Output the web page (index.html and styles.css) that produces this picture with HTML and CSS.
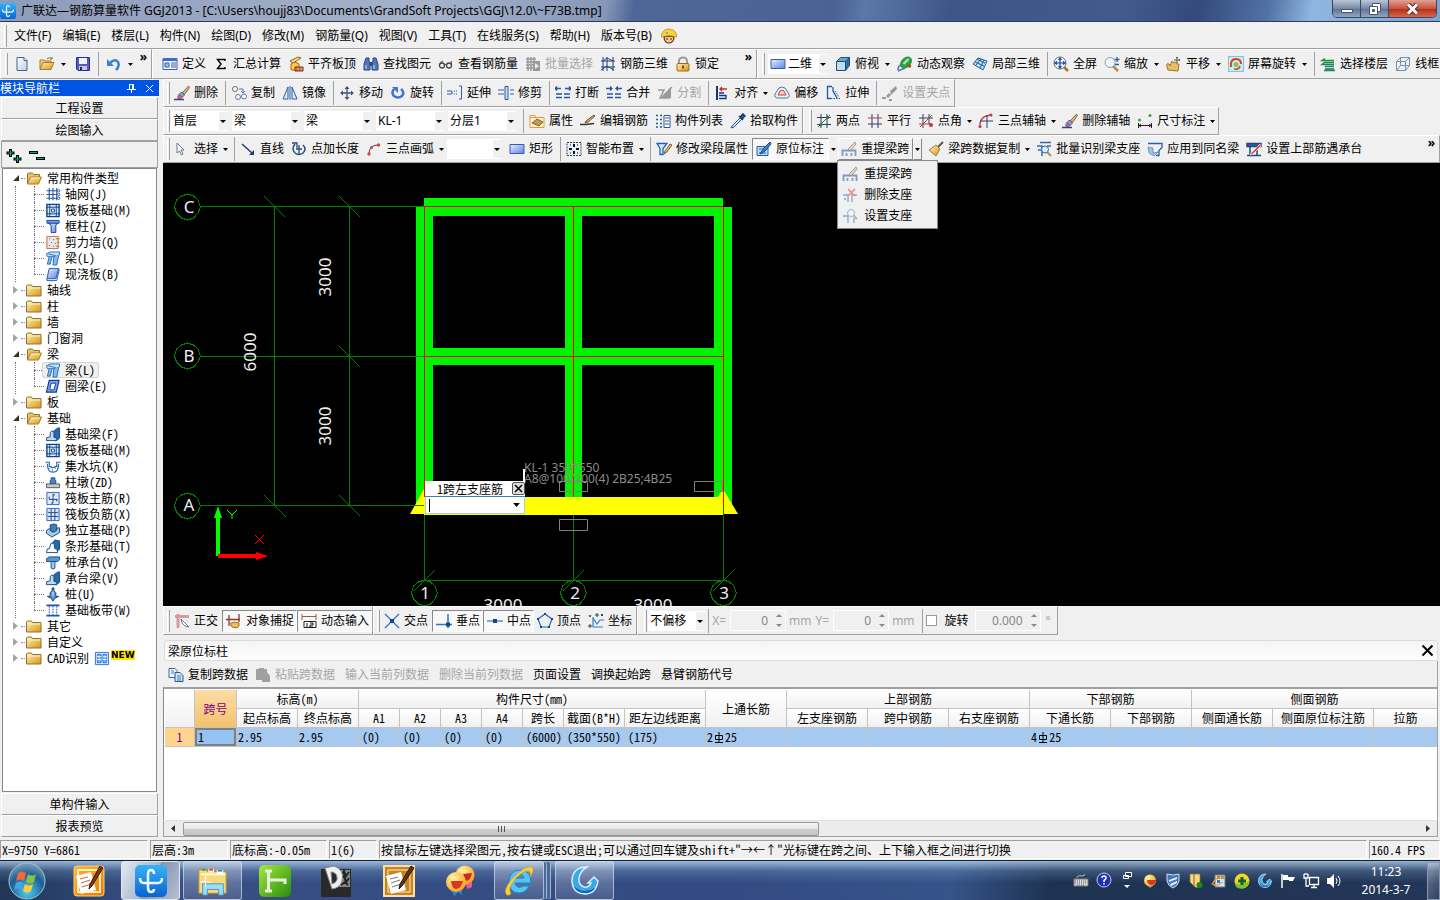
FILE: index.html
```html
<!DOCTYPE html>
<html lang="zh-CN">
<head>
<meta charset="utf-8">
<title>广联达—钢筋算量软件 GGJ2013</title>
<link rel="stylesheet" href="styles.css">
</head>
<body>
<svg class="sprite" width="0" height="0" aria-hidden="true">
<defs>
<linearGradient id="gBlue" x1="0" y1="0" x2="1" y2="1"><stop offset="0" stop-color="#e4eeff"/><stop offset="1" stop-color="#5c86e0"/></linearGradient>
<linearGradient id="gGold" x1="0" y1="0" x2="1" y2="1"><stop offset="0" stop-color="#fdf3b8"/><stop offset="1" stop-color="#d9930f"/></linearGradient>
<linearGradient id="gPaper" x1="0" y1="0" x2="1" y2="1"><stop offset="0" stop-color="#fff"/><stop offset="1" stop-color="#b9cfe6"/></linearGradient>
<linearGradient id="gSky" x1="0" y1="0" x2="0" y2="1"><stop offset="0" stop-color="#36b3f6"/><stop offset="1" stop-color="#0b62d2"/></linearGradient>
<linearGradient id="gGreen" x1="0" y1="0" x2="1" y2="1"><stop offset="0" stop-color="#a6e83e"/><stop offset="1" stop-color="#278d0c"/></linearGradient>
<linearGradient id="gOrange" x1="0" y1="0" x2="1" y2="1"><stop offset="0" stop-color="#ffb52e"/><stop offset="1" stop-color="#f07800"/></linearGradient>
<radialGradient id="gOrb" cx=".5" cy=".8" r=".8"><stop offset="0" stop-color="#4fd0f5"/><stop offset=".6" stop-color="#1c5c94"/><stop offset="1" stop-color="#7fa4bd"/></radialGradient>
<radialGradient id="gFace" cx=".35" cy=".3" r=".8"><stop offset="0" stop-color="#fff3a8"/><stop offset="1" stop-color="#f69d0c"/></radialGradient>
</defs>
<symbol id="app" viewBox="0 0 32 32"><rect width="32" height="32" rx="5" fill="url(#gSky)"/><path d="M19 9q0-4-3-4t-3 4v14q0 4 3 4t3-3M5 13q0 5 4 5h14q4 0 4-5" fill="none" stroke="#e9f6ff" stroke-width="2.500"/></symbol>
<symbol id="new" viewBox="0 0 16 16"><path d="M3 1.500h7l3 3v10H3z" fill="url(#gPaper)" stroke="#4b6385"/><path d="M10 1.500v3h3" fill="#fff" stroke="#4b6385"/></symbol>
<symbol id="open" viewBox="0 0 16 16"><path d="M1 13V4h4l1 1h6v2" fill="#f4cf72" stroke="#a97a2c"/><path d="M1 13.500l3-7h11l-3 7z" fill="url(#gGold)" stroke="#a97a2c"/><path d="M8 3q3-3 5 0m0-2v2h-2" fill="none" stroke="#7a6a4a"/></symbol>
<symbol id="save" viewBox="0 0 16 16"><path d="M1.500 1.500h13v13H3l-1.500-1.500z" fill="#5759c4" stroke="#2c2d86"/><path d="M4 2h8v6H4z" fill="#f2f4fb"/><path d="M4 10h8v4H4z" fill="#c4c6e6"/><path d="M5 11h2v3H5z" fill="#23245e"/></symbol>
<symbol id="undo" viewBox="0 0 16 16"><path d="M4 7q5-5 8-1 2 4-2 8" fill="none" stroke="#3f7fd0" stroke-width="2.500"/><path d="M1 3v7h7z" fill="#3f7fd0"/></symbol>
<symbol id="define" viewBox="0 0 16 16"><path d="M1 2.500h14v11H1z" fill="#eef4ff" stroke="#3a62a8"/><path d="M1 2h14v3H1z" fill="#3c6fc4"/><path d="M3 7h4v4H3z" fill="#9ab9ea" stroke="#3a62a8"/><path d="M9 7h5M9 9h5M9 11h5" stroke="#3a62a8"/></symbol>
<symbol id="sum" viewBox="0 0 16 16"><path d="M12 5V3.500H4.500L8 8l-3.500 4.500H12V11" fill="none" stroke="#000" stroke-width="1.400"/></symbol>
<symbol id="slab" viewBox="0 0 16 16"><path d="M2 5l8-4 3 1-8 5z" fill="#f8e08c" stroke="#8a6116"/><path d="M3 14V8l4-2 4 2v6z" fill="#ffc94c" stroke="#a8690d"/><path d="M7 15V11h8v4z" fill="#b4522c" stroke="#7b2f13"/><path d="M7 13h8M10 11v4M13 11v4" stroke="#eeb595" stroke-width=".7"/></symbol>
<symbol id="find" viewBox="0 0 16 16"><path d="M3 2h3v3l1 2v7H1V8z M10 2h3l2 6v6H9V7l1-2z" fill="#4f76b8" stroke="#2b4680"/><path d="M7 6h2v4H7z" fill="#2b4680"/><path d="M3 9v4M11 9v4" stroke="#d2e1fa"/></symbol>
<symbol id="glasses" viewBox="0 0 16 16"><circle cx="4" cy="9.500" r="2.500" fill="none" stroke="#444" stroke-width="1.300"/><circle cx="11" cy="9.500" r="2.500" fill="none" stroke="#444" stroke-width="1.300"/><path d="M6.500 9q1-1 2 0M2 8q1-3 3-3M13 9q1-3 0-4" fill="none" stroke="#444"/></symbol>
<symbol id="batch" viewBox="0 0 16 16"><path d="M1 3h10M1 6h8M1 9h8M1 12h8M3 1v14M6 1v14M9 1v4" stroke="#999" stroke-width="1.500"/><path d="M8 5h7v10H8z" fill="#999"/><path d="M10 7l4 3-4 3z" fill="#eee"/></symbol>
<symbol id="rebar3d" viewBox="0 0 16 16"><path d="M3 1v14M7 1v14M13 1v14M1 5h14M1 11h14M1 14l6-4M7 10l7 4M3 5l4-3 6 3" fill="none" stroke="#243f78"/></symbol>
<symbol id="lock" viewBox="0 0 16 16"><path d="M4 8V5q0-3.500 4-3.500T12 5v3" fill="none" stroke="#9c9c9c" stroke-width="2"/><rect x="2" y="7.500" width="12" height="7.500" rx="1" fill="url(#gGold)" stroke="#9c6c15"/><path d="M8 9.500v3" stroke="#553607" stroke-width="1.600"/></symbol>
<symbol id="rect" viewBox="0 0 16 16"><path d="M1 3.500h14v9H1z" fill="url(#gBlue)" stroke="#3a5cb0"/></symbol>
<symbol id="cube" viewBox="0 0 16 16"><path d="M1.500 5.500h9v9h-9z" fill="#c4dcf0" stroke="#1e4f7c"/><path d="M1.500 5.500l4-4h9l-4 4z" fill="#6ba5d4" stroke="#1e4f7c"/><path d="M10.500 5.500l4-4v8l-4 5z" fill="#2d6ea8" stroke="#1e4f7c"/></symbol>
<symbol id="wire" viewBox="0 0 16 16"><path d="M1.500 5.500h9v9h-9zM1.500 5.500l4-4h9l-4 4M14.500 1.500v8l-4 5M5.500 1.500v8h9M5.500 9.500l-4 5" fill="none" stroke="#7292b4"/></symbol>
<symbol id="orbit" viewBox="0 0 16 16"><ellipse cx="9" cy="6.500" rx="6.500" ry="4.500" fill="#2aa43c" stroke="#146b22" stroke-width=".6" transform="rotate(-45 9 6.500)"/><path d="M6.500 8l5-5" stroke="#b5efac" stroke-width="2"/><path d="M1 14q0-5 4-5M1 15l7-3" fill="none" stroke="#4e78b0" stroke-width="1.500"/><circle cx="12.500" cy="10" r="1.700" fill="#d43b1c"/></symbol>
<symbol id="part3d" viewBox="0 0 16 16"><path d="M1 8l5-6 9 3-4 9z" fill="#bcdaf0" stroke="#256199"/><path d="M4 9l5-6M8 12l4-8M3 6l9 4M5 3l8 4" stroke="#256199"/></symbol>
<symbol id="full" viewBox="0 0 16 16"><path d="M11 11l4 4" stroke="#b17121" stroke-width="2.500"/><circle cx="7" cy="7" r="6" fill="#eaf3ff" stroke="#55708f"/><path d="M7 2v10M2 7h10M5.500 4L7 2l1.500 2M5.500 10L7 12l1.500-2M4 5.500L2 7l2 1.500M10 5.500L12 7l-2 1.500" fill="none" stroke="#214c93" stroke-width="1.200"/></symbol>
<symbol id="zoom" viewBox="0 0 16 16"><path d="M9 10l5 5" stroke="#b98d4e" stroke-width="2.500"/><circle cx="6" cy="6.500" r="5" fill="#eef5fc" stroke="#8b9bac"/><path d="M13 1v5M10.500 3.500h5M11 8.500h4" stroke="#345f9f" stroke-width="1.300"/></symbol>
<symbol id="pan" viewBox="0 0 16 16"><path d="M2 14q-3-8 1-6l1 2 2-5 2 2 2-1 1 2 2 0-1 7z" fill="#e9bf64" stroke="#9e7424"/><path d="M11 1v6M8 4h6M10 2l1-1 1 1M13 3l1 1-1 1" fill="none" stroke="#555"/></symbol>
<symbol id="rotscr" viewBox="0 0 16 16"><rect x=".5" y=".5" width="15" height="15" fill="#c4edf7" stroke="#7fc4d6"/><path d="M3 11q-1-8 5-8 5 0 5 5" fill="none" stroke="#e33a22" stroke-width="2"/><path d="M6 13q5 1 6-3" fill="none" stroke="#e33a22" stroke-width="1.500"/><circle cx="8" cy="8.500" r="2.500" fill="#84c840"/></symbol>
<symbol id="floor" viewBox="0 0 16 16"><path d="M5 2.500l-3 2h12M5 6.500h9M5 6l-3 2.500h12M5 10.500h9M4 14.500h11" fill="none" stroke="#1f8a4c" stroke-width="1.500"/><path d="M5 13h9" stroke="#275a9b" stroke-width="1.500"/></symbol>
<symbol id="brush" viewBox="0 0 16 16"><path d="M14.500 1l-6 6.500 2 2 5-7z" fill="#dcb184" stroke="#6e4a25" stroke-width=".8"/><path d="M7.500 7l3 3-2.500 2.500-3-3z" fill="#8aa2d6" stroke="#2f4577" stroke-width=".8"/><path d="M5 9.500l3 3-1.500 1.500H4.500L3.500 12z" fill="#e0628c" stroke="#7b2c4c" stroke-width=".6"/><path d="M0 14.500h10" stroke="#234a8c" stroke-width="1.500"/></symbol>
<symbol id="copy" viewBox="0 0 16 16"><circle cx="4" cy="4" r="2.500" fill="#fff" stroke="#666"/><circle cx="7" cy="12" r="2.500" fill="#fff" stroke="#5577a5"/><circle cx="13" cy="11.500" r="2.500" fill="#fff" stroke="#5577a5"/><path d="M8 4h4v4M10 6l2 2 2-2" fill="none" stroke="#5577a5"/></symbol>
<symbol id="mirror" viewBox="0 0 16 16"><path d="M6 2v12H1zM10 2v12h5z" fill="#dbe9fb" stroke="#2f5ea4"/><path d="M8 1v14" stroke="#2f5ea4"/></symbol>
<symbol id="move" viewBox="0 0 16 16"><path d="M8 2v12M2 8h12" stroke="#3d5779" stroke-width="1.300"/><path d="M8 1l2.500 3h-5zM8 15l2.500-3h-5zM1 8l3-2.500v5zM15 8l-3-2.500v5z" fill="#3d5779"/></symbol>
<symbol id="rotate" viewBox="0 0 16 16"><path d="M4 4q-3 4 0 7 4 3 8 0 3-4-1-7" fill="none" stroke="#3b78cc" stroke-width="2.500"/><path d="M2 2h6v6z" fill="#3b78cc"/></symbol>
<symbol id="extend" viewBox="0 0 16 16"><path d="M0 6h5v3H0M7 6h1M7 9h1M9 6h1M9 9h1" fill="none" stroke="#2f5ea4"/><path d="M12 1h2.500v13H12" fill="none" stroke="#2f5ea4"/></symbol>
<symbol id="trim" viewBox="0 0 16 16"><path d="M0 5h6M0 9h6M12 5h4M12 9h4" stroke="#2f5ea4"/><path d="M7 1.500h3v13H7z" fill="#c5d9f2" stroke="#2f5ea4"/></symbol>
<symbol id="break" viewBox="0 0 16 16"><path d="M0 3.500h6M10 3.500h6M2 1.500l-2 2 2 2M14 1.500l2 2-2 2M1 9h6M1 12.500h6M9 9h6M9 12.500h6" fill="none" stroke="#2456a4" stroke-width="1.300"/></symbol>
<symbol id="merge" viewBox="0 0 16 16"><path d="M0 3.500h6M10 3.500h6M4 1.500l2 2-2 2M12 1.500l-2 2 2 2M1 9h6M1 12.500h6M9 9h6M9 12.500h6" fill="none" stroke="#2456a4" stroke-width="1.300"/></symbol>
<symbol id="split" viewBox="0 0 16 16"><path d="M1 5h6l-4 8h9V5l3-3" fill="none" stroke="#999" stroke-width="1.500"/><path d="M3 13L14 2v11z" fill="#999"/></symbol>
<symbol id="align" viewBox="0 0 16 16"><path d="M3 1v14" stroke="#16357c" stroke-width="2"/><path d="M6 4h7M8 2L6 4l2 2" fill="none" stroke="#c62a2a" stroke-width="1.300"/><path d="M5 8h5M5 10.500h7v3H5" fill="none" stroke="#16357c" stroke-width="1.300"/></symbol>
<symbol id="offset" viewBox="0 0 16 16"><path d="M5 3q3-2 6 0l4 6q1 4-3 4H4q-4 0-3-4z" fill="#eaf5fa" stroke="#467c98"/><path d="M6 6q2-2 4 0l2 4H4z" fill="#f6cccc" stroke="#c44040"/></symbol>
<symbol id="stretch" viewBox="0 0 16 16"><path d="M7 1.500H2.500v12H6M8 2v4l4 7" fill="none" stroke="#2456a4" stroke-width="1.300"/><path d="M6 13.500h9M10 6l4 6" stroke="#2456a4" stroke-dasharray="1.500 1"/></symbol>
<symbol id="grip" viewBox="0 0 16 16"><path d="M14 1l-6 5 1 4 6-6z M7 8l-3 3 2 2 3-3z" fill="#999"/><path d="M0 13h4M7 15h3" stroke="#999" stroke-width="2"/></symbol>
<symbol id="prop" viewBox="0 0 16 16"><path d="M1 2.500h5l1 2h8v10H1z" fill="#fff3d6" stroke="#e09a3a"/><path d="M1 4.500h14" stroke="#e09a3a"/><path d="M3 10l5-4 6 3-4 4z" fill="#c79a48" stroke="#5e3d13" stroke-width=".7"/></symbol>
<symbol id="editbar" viewBox="0 0 16 16"><path d="M14 2l-8 6-1 2 3-1 7-6z" fill="#e4b76c" stroke="#70502a"/><path d="M0 11.500h6l8-1" fill="none" stroke="#333" stroke-width="1.500"/></symbol>
<symbol id="list" viewBox="0 0 16 16"><path d="M1 2.500h2M1 6.500h2M1 10.500h2M1 14h2M5 2.500h2M5 6.500h2M5 10.500h2M5 14h2" stroke="#2a569d" stroke-width="1.500"/><path d="M9 2.500h6v12H9z" fill="#fff" stroke="#2a569d"/><path d="M10 5h4M10 8h4M10 11h4" stroke="#2a569d"/></symbol>
<symbol id="pick" viewBox="0 0 16 16"><path d="M10 5l-8 8-1 2 3-1 8-8z" fill="#d8ecff" stroke="#27588f"/><path d="M9 3l4 4M10 4l3-3 2 2-3 3z" fill="#1c5ba5" stroke="#143f75" stroke-width="1.500"/></symbol>
<symbol id="twopt" viewBox="0 0 16 16"><path d="M5 1v14M11 1v14M1 4.500h14M1 11.500h14" stroke="#293f6c"/><path d="M2 14L14 2" stroke="#37792b"/><circle cx="5" cy="11.500" r="1.500" fill="#37792b"/><circle cx="11.500" cy="4.500" r="1.500" fill="#37792b"/></symbol>
<symbol id="para" viewBox="0 0 16 16"><path d="M5 1v14M11 1v14" stroke="#293f6c"/><path d="M1 5h14" stroke="#c43a3a"/><path d="M1 11h14" stroke="#293f6c"/></symbol>
<symbol id="ptang" viewBox="0 0 16 16"><path d="M5 1v14M11 1v10M1 5h14" stroke="#293f6c"/><path d="M2 14L14 2M1 11h12" stroke="#c43a3a"/><circle cx="13" cy="12" r="2" fill="#c43a3a"/></symbol>
<symbol id="arcax" viewBox="0 0 16 16"><path d="M2 14Q1 3 13 2" fill="none" stroke="#c43a3a" stroke-width="1.300"/><path d="M2 8h13M9 2v13" stroke="#293f6c"/><circle cx="2" cy="13.500" r="1.500" fill="#c43a3a"/><circle cx="13" cy="2" r="1.500" fill="#c43a3a"/></symbol>
<symbol id="dim" viewBox="0 0 16 16"><circle cx="2.500" cy="7" r="1.500" fill="#37a03a"/><circle cx="13" cy="2.500" r="1.500" fill="#37a03a"/><path d="M1.500 10v5M14.500 10v5M2 12.500h12M4 11l-2 1.500L4 14M12 11l2 1.500-2 1.500" fill="none" stroke="#222"/></symbol>
<symbol id="cursor" viewBox="0 0 16 16"><path d="M3 2v10l2.500-2 2 4 1.500-1-2-4h3z" fill="#fff" stroke="#5e7898"/></symbol>
<symbol id="line" viewBox="0 0 16 16"><path d="M2 3l10 9" stroke="#1e3f70" stroke-width="1.500"/><path d="M14 14H9l5-5z" fill="#1e3f70"/></symbol>
<symbol id="ptlen" viewBox="0 0 16 16"><path d="M4 3q-4 5 0 9 4 3 8 0 4-4 0-8" fill="none" stroke="#274b80" stroke-width="1.500"/><path d="M1 2h5v5M8 4v9M5 8h6" fill="none" stroke="#274b80" stroke-width="1.300"/></symbol>
<symbol id="arc" viewBox="0 0 16 16"><path d="M3 13Q3 4 12 4" fill="none" stroke="#274b80"/><circle cx="3" cy="13" r="1.700" fill="#d24c28"/><circle cx="5.500" cy="6.500" r="1.500" fill="#d24c28"/><circle cx="12.500" cy="4" r="1.700" fill="#d24c28"/></symbol>
<symbol id="smart" viewBox="0 0 16 16"><path d="M1 1.500h14v13H1z" fill="#e8f0fb" stroke="#31425c" stroke-dasharray="2 1"/><path d="M8 3v3M8 10v3M3 8h3M10 8h3" stroke="#111" stroke-width="2"/><path d="M4 4h1M11 4h1M4 12h1M11 12h1" stroke="#111"/></symbol>
<symbol id="modseg" viewBox="0 0 16 16"><path d="M1 2.500h10l-4 5v6H4v-6z" fill="#d7ebff" stroke="#1f63b0" stroke-width="1.300"/><path d="M14 3l-5 7-1 3 3-2 5-7z" fill="#e8b777" stroke="#5e482a" stroke-width=".8"/></symbol>
<symbol id="mark" viewBox="0 0 16 16"><path d="M1 5.500h11v9H1z" fill="#bcd8f7" stroke="#2860a8"/><path d="M3 8h7M3 12h7" stroke="#2860a8"/><path d="M14 1L8 7l-4 6 5-3 6-7z" fill="#3e85d0" stroke="#17457e"/></symbol>
<symbol id="respan" viewBox="0 0 16 16"><path d="M1.500 15V9.500h13V15M5.500 15v-3M10.500 15v-3" fill="none" stroke="#7c9cc6" stroke-width="1.800"/><path d="M14 1L8 7l-1 3 3-1 5-6z" fill="#e4d5bd" stroke="#9a8b76" stroke-width=".8"/></symbol>
<symbol id="delsup" viewBox="0 0 16 16"><path d="M1 8h5v7M15 8h-5v7M2 12h2" fill="none" stroke="#83a8cb" stroke-width="1.300"/><path d="M6 2l7 7M13 2L6 9" stroke="#f0887a" stroke-width="1.500"/></symbol>
<symbol id="setsup" viewBox="0 0 16 16"><path d="M1 8h5v7M12 10v5" fill="none" stroke="#83a8cb" stroke-width="1.300"/><path d="M11 7l4 4" stroke="#ceb07b" stroke-width="2"/><circle cx="9" cy="5" r="3.500" fill="#f3f9fd" stroke="#9fb1c2"/></symbol>
<symbol id="broom" viewBox="0 0 16 16"><path d="M15 1l-5 5" stroke="#555" stroke-width="2"/><path d="M8 4l4 4-4 7-7-6z" fill="url(#gGold)" stroke="#97824a"/></symbol>
<symbol id="recog" viewBox="0 0 16 16"><path d="M4 1.500h11M1 5h5v10M11 5h4M2 9h4" fill="none" stroke="#36689b" stroke-width="1.500"/><path d="M11 11l4 4" stroke="#c28c3f" stroke-width="2"/><circle cx="9" cy="8.500" r="3.500" fill="#d6edfb" stroke="#36689b"/></symbol>
<symbol id="apply" viewBox="0 0 16 16"><path d="M1 2.500h14v4l-3 3v5h-3" fill="none" stroke="#2462a8" stroke-width="1.300"/><path d="M1 6l5 1v5l5-1-4 4-5-3z" fill="#9fc4ed" stroke="#577ca8" stroke-width=".7"/></symbol>
<symbol id="topbar" viewBox="0 0 16 16"><path d="M1 2.500h14v3H1zM4 6v9M11 6v9M1 14.500h14" fill="#2c63a5" stroke="#1f4880" stroke-width="1.500"/><path d="M14 3l-9 9-1 2 3-1 8-8z" fill="#e54a32" stroke="#fff" stroke-width=".6"/></symbol>
<symbol id="ortho" viewBox="0 0 16 16"><path d="M1 3.500h14M4 1v14" stroke="#d99a9a" stroke-width="3"/><path d="M7 6l8 8-4-1-3-3z" fill="#fff" stroke="#6b7d90"/></symbol>
<symbol id="osnap" viewBox="0 0 16 16"><path d="M0 6.500h14M3 2v11M13 1v8" stroke="#8b3a26" stroke-width="1.300"/><path d="M6 14q-3-5 0-4l2-1 5 1v3l-2 2z" fill="#eebf5a" stroke="#997020"/></symbol>
<symbol id="dyn" viewBox="0 0 16 16"><path d="M1 1v6M15 1v6M1 3.500h14" stroke="#9a5a53"/><path d="M3 8.500h12v6H3z" fill="#fff" stroke="#222"/><path d="M6 10v4M9 10h3v2H9v2h3" fill="none" stroke="#111"/></symbol>
<symbol id="xpt" viewBox="0 0 16 16"><path d="M1 1l14 14M15 1L1 15" stroke="#3573c0" stroke-width="1.300"/><path d="M6 6h4v4H6z" fill="#15448c"/></symbol>
<symbol id="perp" viewBox="0 0 16 16"><path d="M0 11.500h16M12 1v14" stroke="#3573c0" stroke-width="1.500"/><path d="M10 9.500h4v4h-4z" fill="#15448c"/></symbol>
<symbol id="mid" viewBox="0 0 16 16"><path d="M0 8h16" stroke="#4f92dc" stroke-width="1.500"/><path d="M6 6h4v4H6z" fill="#15448c"/></symbol>
<symbol id="vertex" viewBox="0 0 16 16"><path d="M8 1l7 5-3 8H4L1 6z" fill="none" stroke="#2563b0" stroke-width="1.200"/><path d="M7 0h2v2H7zM14 5h2v2h-2zM0 5h2v2H0zM3 13h2v2H3zM11 13h2v2h-2z" fill="#15448c"/></symbol>
<symbol id="coord" viewBox="0 0 16 16"><path d="M5 4v10h10M5 5l4 6 3-4 4 0" fill="none" stroke="#3a7cc6" stroke-width="1.200"/><path d="M1 2l1 2 1-2M1 12h2v2H1zM8 1h2v2H8zM13 1l2 2M15 1l-2 2" fill="none" stroke="#345"/></symbol>
<symbol id="docs" viewBox="0 0 16 16"><path d="M1 1.500h6l2 2v7H1z" fill="#eaf3ff" stroke="#37699f"/><path d="M7 5.500h5l3 3v6H7z" fill="#cfe2f8" stroke="#25588f"/><path d="M3 4h3M3 6h3M9 9h4M9 11h4M9 13h4" stroke="#4c80bb"/></symbol>
<symbol id="paste" viewBox="0 0 16 16"><path d="M1 2h3V1h5v1h3v3l3 4v6H7v-2H1z" fill="#a0a0a0"/></symbol>
<symbol id="folder" viewBox="0 0 16 14"><path d="M.5 12.500v-10l1-1h4l1 1.500h8.500v9.500z" fill="url(#gGold)" stroke="#8e7434"/><path d="M1.500 4.500h13" stroke="#fff3bd"/></symbol>
<symbol id="folderopen" viewBox="0 0 16 14"><path d="M1.500 12.500v-10l1-1h4l1 1.500h6v3" fill="#e9c464" stroke="#8e7434"/><path d="M1.500 12.500l3-7h11l-3 7z" fill="url(#gGold)" stroke="#a97f25"/><path d="M5 6.500h9" stroke="#fff6cf"/></symbol>
<symbol id="t-net" viewBox="0 0 16 16"><path d="M4 1v13M8 1v13M12 1v13M1 4h13M1 8h13M1 12h13" stroke="#2a55a4" stroke-width="1.200"/><circle cx="14" cy="4" r="1.300" fill="#fff" stroke="#2a55a4"/><circle cx="14" cy="8" r="1.300" fill="#fff" stroke="#2a55a4"/><circle cx="14" cy="12" r="1.300" fill="#fff" stroke="#2a55a4"/></symbol>
<symbol id="t-raft" viewBox="0 0 16 16"><path d="M1.500 1.500h13v13h-13z" fill="#d3e5f8" stroke="#0d448c" stroke-width="1.500"/><path d="M4.500 1v14M11.500 1v14M1 4.500h14M1 11.500h14" stroke="#0d448c"/><path d="M6.500 6.500h3v3h-3z" fill="#fff" stroke="#0d448c"/></symbol>
<symbol id="t-col" viewBox="0 0 16 16"><path d="M1.500 1.500h13v3h-13z" fill="#7aa0f0" stroke="#1440a8"/><path d="M3 4.500h10l-2 2v8H6v-8z" fill="url(#gBlue)" stroke="#1440a8"/></symbol>
<symbol id="t-wall" viewBox="0 0 16 16"><path d="M1.500 1.500h12v13h-12z" fill="#e9e9e9" stroke="#c26a2e"/><path d="M4 4h1M8 5h1M6 8h1M10 9h1M4 11h1M8 12h1M11 4h1M11 12h1" stroke="#555"/><path d="M12 4h3M12 8h3M12 12h3" stroke="#e06a16" stroke-width="1.300"/></symbol>
<symbol id="t-beam" viewBox="0 0 16 16"><path d="M1 3l4-2h10v3l-4 2H2z" fill="#c8e0f8" stroke="#1f6cc0"/><path d="M4 6l-2 8h3l2-8M9 6l-1 9h4l2-10" fill="#86b9ef" stroke="#1f6cc0"/><path d="M3 3l8 2" stroke="#1f6cc0"/></symbol>
<symbol id="t-slab" viewBox="0 0 16 16"><path d="M4 1.500h10l-3 11H1.500z" fill="url(#gBlue)" stroke="#1c54ac"/><path d="M1.500 12.500v2H12l2.500-11-.5-2" fill="none" stroke="#1c54ac"/></symbol>
<symbol id="t-ring" viewBox="0 0 16 16"><path d="M4 1.500h10.500l-3 12.500H1z" fill="#7ba4ea" stroke="#153f9e" stroke-width="1.300"/><path d="M6 4.500h5l-2 7H4.500z" fill="#fff" stroke="#153f9e"/></symbol>
<symbol id="t-fbeam" viewBox="0 0 16 16"><path d="M8 5l5-4h2v11l-4 3z" fill="#286aa7" stroke="#154a83"/><path d="M1 14.500v-3l4-1V6l2-2 2 2v5l3 1v2.500z" fill="#bfdaf0" stroke="#154a83"/></symbol>
<symbol id="t-pit" viewBox="0 0 16 16"><path d="M0 3.500h4V8h2v1h4V8h2V3.500h4M2 5q0 9 6 9t6-9" fill="none" stroke="#2a68b6" stroke-width="1.200"/><path d="M4 10h1M7 11h1M10 10h1M7 12.500h1M12 8h1" stroke="#2a68b6"/></symbol>
<symbol id="t-pier" viewBox="0 0 16 16"><path d="M5 9V6h1V3h4v3h1v3z" fill="#4d84cc" stroke="#174b95"/><path d="M1 9.500h14v4H1z" fill="#c9c9c9" stroke="#555"/></symbol>
<symbol id="t-main" viewBox="0 0 16 16"><path d="M1.500 1.500h13v13h-13z" fill="#dceafb" stroke="#2b60bb"/><path d="M8 3v10M4 6v3h9M8 4h2M6 13h2M12 9v2" fill="none" stroke="#153f8c"/></symbol>
<symbol id="t-neg" viewBox="0 0 16 16"><path d="M1.500 1.500h13v13h-13z" fill="#dceafb" stroke="#2b60bb"/><path d="M6 2v12M10 2v12M3 5v1h10V5M3 11v-1h10v1" fill="none" stroke="#153f8c"/></symbol>
<symbol id="t-iso" viewBox="0 0 16 16"><path d="M1 8l3-2 3 1 8-2v5l-8 5-6-4z" fill="#a9cbe8" stroke="#154a73"/><path d="M5 8V2l4-1 3 1v6l-4 2z" fill="#3c7fb4" stroke="#154a73"/></symbol>
<symbol id="t-strip" viewBox="0 0 16 16"><path d="M7 5l3-4 5 1v9l-4 3z" fill="#286aa7" stroke="#154a83"/><path d="M1 14.500l1-4h2l2-6h3l1 6h2l1 4z" fill="#fff" stroke="#154a83"/></symbol>
<symbol id="t-cap" viewBox="0 0 16 16"><path d="M1 4l3-2h11v3l-2 2H1z" fill="#5597d5" stroke="#154a83"/><path d="M6 7h4v7l-2 1-2-1z" fill="#a9ccee" stroke="#154a83"/></symbol>
<symbol id="t-pile" viewBox="0 0 16 16"><path d="M7 1h2v3l2 2v4h3l-4 2-2 3-2-3-4-2h3V6l2-2z" fill="#5b91cf" stroke="#123f75"/><path d="M8 5v5" stroke="#fff"/></symbol>
<symbol id="t-band" viewBox="0 0 16 16"><path d="M1 2.500h14M1 13.500h14" stroke="#1d57b4" stroke-width="2"/><path d="M4 3v10M12 3v10M8 3v10" stroke="#1d57b4" stroke-dasharray="2 1"/></symbol>
<symbol id="t-cad" viewBox="0 0 16 16"><path d="M1 1.500h14v13H1z" fill="#e3f1ff" stroke="#2374d1"/><path d="M3 3.500h4v9H3zM9 3.500h4v9H9z" fill="#7ab5f2" stroke="#2374d1"/><path d="M3 6h4M3 9h4M9 6h4M9 9h4" stroke="#fff"/></symbol>
<symbol id="worker" viewBox="0 0 16 16"><circle cx="8" cy="10" r="5.500" fill="#6c3a1f"/><path d="M4 9h8v3q-4 5-8 0z" fill="#f4c79b"/><path d="M0 9Q1 1 8 1t8 8Q8 6.500 0 9z" fill="#fbd137" stroke="#b28510" stroke-width=".7"/><path d="M6 10v2M10 10v2" stroke="#332"/><path d="M5 5h2" stroke="#5a9ad0" stroke-width="1.500"/></symbol>
<symbol id="arr" viewBox="0 0 5 3"><path d="M0 0h5L2.500 3z" fill="#000"/></symbol>
<symbol id="note" viewBox="0 0 32 32"><rect x="1" y="1" width="30" height="30" rx="3" fill="url(#gOrange)" stroke="#fbd27b"/><rect x="5" y="5" width="22" height="22" fill="none" stroke="#fff0c5" stroke-width="2"/><path d="M3 11l15-4 5 18-15 4z" fill="#fff"/><path d="M7 14l8-2M8 18l9-3M9 22l9-3" stroke="#c9652d"/><path d="M27 1l3 2-11 18-3 3 1-5z" fill="#793713" stroke="#401b08"/></symbol>
<symbol id="note2" viewBox="0 0 32 32"><rect x="1" y="1" width="30" height="30" fill="#c8841f" stroke="#fbe0a3" stroke-width="2"/><rect x="5" y="5" width="22" height="22" fill="none" stroke="#fff0c5"/><path d="M3 11l15-4 5 18-15 4z" fill="#fff"/><path d="M7 14l8-2M8 18l9-3M9 22l9-3" stroke="#777"/><path d="M28 1l3 2-12 18-3 3 1-5z" fill="#593618" stroke="#2a1608"/></symbol>
<symbol id="explorer" viewBox="0 0 34 32"><path d="M2 29V4h8l1 2h20v23z" fill="#f6da7d" stroke="#b28d33"/><path d="M4 8h26v2H4zM12 3h6v4h-6zM21 4h7v4h-7z" fill="#fffbe0"/><path d="M5 3h4v2H5z" fill="#33a43d"/><path d="M13 3h4v2h-4z" fill="#d6402e"/><path d="M22 4h5v2h-5z" fill="#3582da"/><path d="M6 31V19h22v12h-5v-6H11v6z" fill="#9edcf4" stroke="#4595bd"/><path d="M9 10v12M3 17h12" stroke="#fff"/></symbol>
<symbol id="gapp" viewBox="0 0 32 32"><rect width="32" height="32" rx="5" fill="url(#gGreen)"/><path d="M6 6h7M9.500 6v20M6 26h7M10 15h16v4" fill="none" stroke="#e7f2dc" stroke-width="3"/></symbol>
<symbol id="dapp" viewBox="0 0 32 32"><path d="M0 4h30v28H0z" fill="#292929"/><path d="M18 5h11v17H18z" fill="#888"/><path d="M19 7l2 3 2-4 2 5 3-4M19 14l4-3 2 6 3-4M20 20l4-3 3 3" stroke="#222" stroke-width="2" fill="none"/><path d="M4 3l9-2q11 4 8 15-2 7-10 8zM10 7l1 12q6-2 5-7t-6-5z" fill="#eee" fill-rule="evenodd" stroke="#888"/></symbol>
<symbol id="faces" viewBox="0 0 32 32"><path d="M6 26l4 5 3-4 4 3V24z" fill="#2b83d5"/><path d="M20 19l3 5 4-2V17z" fill="#ec56a5"/><circle cx="20" cy="10" r="9.500" fill="url(#gFace)"/><path d="M18 9l9-1q-1 7-6 8z" fill="#c92c1d"/><circle cx="11" cy="17" r="10" fill="url(#gFace)"/><path d="M6 16l12 0q-2 8-7 8-4 0-5-8z" fill="#d93820"/></symbol>
<symbol id="ie" viewBox="0 0 32 32"><path d="M26 21q-3 7-10 7-10 0-10-12Q7 5 17 5q11 0 11 13H12q1 5 6 4l2-1zM12 13h9q-1-4-4-4-4 0-5 4z" fill="#54c4f4" stroke="#1b82c9"/><path d="M4 30q-5-4 5-16Q22 0 29 2q3 3-2 10 1-5-1-6-5-1-13 7Q4 24 8 28q-1 3-4 2z" fill="#f8cf3c" stroke="#d59b18" stroke-width=".5"/></symbol>
<symbol id="swirl" viewBox="0 0 32 32"><path d="M18 2Q4 2 3 15q0 13 13 14 11 0 13-13l-4-4-6 6h3q-2 5-7 4-6-2-5-9Q11 6 18 2z" fill="#3ba8ea" stroke="#d6f0ff" stroke-width="1.500"/><path d="M5 21q8 9 21 2-3 5-11 5-8 0-10-7z" fill="#1261ad"/></symbol>
<symbol id="orb" viewBox="0 0 38 38"><circle cx="19" cy="19" r="18" fill="url(#gOrb)" stroke="#9fc4d8"/><path d="M10 11q4-3 8 0l-2 8q-4-3-8 0z" fill="#ef6a35"/><path d="M20 12q4 3 8 0l-2 8q-4 3-8 0z" fill="#86c440"/><path d="M8 21q4-3 7 0l-2 7q-4-3-7 0z" fill="#48a4e8"/><path d="M17 22q4 3 8 0l-2 7q-4 3-8 0z" fill="#fccf3c"/></symbol>
</svg>

<div class="window">
<header class="titlebar">
  <svg class="ico"><use href="#app"/></svg>
  <h1>广联达—钢筋算量软件 GGJ2013 - [C:\Users\houjj83\Documents\GrandSoft Projects\GGJ\12.0\~F73B.tmp]</h1>
  <div class="winbtns">
    <button aria-label="最小化"><svg width="12" height="12"><path d="M.5 6.500h11v3H.500z" fill="#fff" stroke="#49536b"/></svg></button>
    <button aria-label="还原"><svg width="12" height="12"><path d="M3.500.5h8v8h-8z" fill="#fff" stroke="#49536b"/><path d="M.5 3.500h8v8h-8z" fill="#fff" stroke="#49536b"/><path d="M3.500 6.500h2v2h-2z" fill="#777" stroke="#49536b"/></svg></button>
    <button class="close" aria-label="关闭"><svg width="13" height="12"><path d="M2 1.500l9 9M11 1.500l-9 9" stroke="#6b2a22" stroke-width="5"/><path d="M2 1.500l9 9M11 1.500l-9 9" stroke="#fff" stroke-width="3"/></svg></button>
  </div>
</header>

<nav class="menubar"><i class="grip"></i>
  <button>文件(F)</button><button>编辑(E)</button><button>楼层(L)</button><button>构件(N)</button><button>绘图(D)</button><button>修改(M)</button><button>钢筋量(Q)</button><button>视图(V)</button><button>工具(T)</button><button>在线服务(S)</button><button>帮助(H)</button><button>版本号(B)</button>
  <svg class="ico"><use href="#worker"/></svg>
</nav>

<div class="topbars">
  <div class="bar bar-file"><i class="grip"></i>
    <button class="tb" aria-label="新建"><svg class="ico"><use href="#new"/></svg></button>
    <button class="tb" aria-label="打开"><svg class="ico"><use href="#open"/></svg><svg class="arr"><use href="#arr"/></svg></button>
    <button class="tb" aria-label="保存"><svg class="ico"><use href="#save"/></svg></button><i class="sep"></i>
    <button class="tb" aria-label="撤销"><svg class="ico"><use href="#undo"/></svg><svg class="arr"><use href="#arr"/></svg></button>
    <button class="more" aria-label="更多">»</button>
  </div>
  <div class="bar bar-def">
    <button class="tb"><svg class="ico"><use href="#define"/></svg>定义</button>
    <button class="tb"><svg class="ico"><use href="#sum"/></svg>汇总计算</button>
    <button class="tb"><svg class="ico"><use href="#slab"/></svg>平齐板顶</button>
    <button class="tb"><svg class="ico"><use href="#find"/></svg>查找图元</button>
    <button class="tb"><svg class="ico"><use href="#glasses"/></svg>查看钢筋量</button>
    <button class="tb" disabled><svg class="ico"><use href="#batch"/></svg>批量选择</button>
    <button class="tb"><svg class="ico"><use href="#rebar3d"/></svg>钢筋三维</button>
    <button class="tb"><svg class="ico"><use href="#lock"/></svg>锁定</button>
    <button class="more" aria-label="更多">»</button>
  </div>
  <div class="bar bar-view"><i class="grip"></i>
    <span class="combo w-view"><svg class="ico"><use href="#rect"/></svg><select aria-label="视图模式"><option>二维</option></select></span>
    <button class="tb"><svg class="ico"><use href="#cube"/></svg>俯视<svg class="arr"><use href="#arr"/></svg></button>
    <button class="tb"><svg class="ico"><use href="#orbit"/></svg>动态观察</button>
    <button class="tb"><svg class="ico"><use href="#part3d"/></svg>局部三维</button><i class="sep"></i>
    <button class="tb"><svg class="ico"><use href="#full"/></svg>全屏</button>
    <button class="tb"><svg class="ico"><use href="#zoom"/></svg>缩放<svg class="arr"><use href="#arr"/></svg></button>
    <button class="tb"><svg class="ico"><use href="#pan"/></svg>平移<svg class="arr"><use href="#arr"/></svg></button>
    <button class="tb"><svg class="ico"><use href="#rotscr"/></svg>屏幕旋转<svg class="arr"><use href="#arr"/></svg></button><i class="sep"></i>
    <button class="tb"><svg class="ico"><use href="#floor"/></svg>选择楼层</button>
    <button class="tb"><svg class="ico"><use href="#wire"/></svg>线框</button>
  </div>
</div>

<div class="workspace">
<aside class="dock">
  <div class="dock-title"><span>模块导航栏</span>
    <button aria-label="固定"><svg width="9" height="9"><path d="M2 .5h5M2.500 0v5M5.500 0v5M6.500 0v5M0 5.500h9M4.500 5v4" stroke="#fff" fill="none"/></svg></button>
    <button aria-label="关闭"><svg width="9" height="9"><path d="M1 1l7 7M8 1L1 8" stroke="#fff"/></svg></button>
  </div>
  <button class="dock-btn">工程设置</button>
  <button class="dock-btn">绘图输入</button>
  <div class="tree-tools">
    <button aria-label="全部展开"><svg width="17" height="16"><path d="M4.500 1v8M.5 5h8M11.500 7v8M7.500 11h8" stroke="#000" stroke-width="3"/><path d="M4.500 2v6M1.500 5h6M11.500 8v6M8.500 11h6" stroke="#12a08c"/></svg></button>
    <button aria-label="全部折叠"><svg width="17" height="16"><path d="M0 4.500h9M7 10.500h9" stroke="#000" stroke-width="3"/><path d="M1 4.500h7M8 10.500h7" stroke="#12a08c"/></svg></button>
  </div>
  <ul class="tree">
    <li class="open"><div class="row"><svg class="ico"><use href="#folderopen"/></svg>常用构件类型</div>
      <ul>
        <li><div class="row"><svg class="ico"><use href="#t-net"/></svg>轴网(J)</div></li>
        <li><div class="row"><svg class="ico"><use href="#t-raft"/></svg>筏板基础(M)</div></li>
        <li><div class="row"><svg class="ico"><use href="#t-col"/></svg>框柱(Z)</div></li>
        <li><div class="row"><svg class="ico"><use href="#t-wall"/></svg>剪力墙(Q)</div></li>
        <li><div class="row"><svg class="ico"><use href="#t-beam"/></svg>梁(L)</div></li>
        <li><div class="row"><svg class="ico"><use href="#t-slab"/></svg>现浇板(B)</div></li>
      </ul></li>
    <li><div class="row"><svg class="ico"><use href="#folder"/></svg>轴线</div></li>
    <li><div class="row"><svg class="ico"><use href="#folder"/></svg>柱</div></li>
    <li><div class="row"><svg class="ico"><use href="#folder"/></svg>墙</div></li>
    <li><div class="row"><svg class="ico"><use href="#folder"/></svg>门窗洞</div></li>
    <li class="open"><div class="row"><svg class="ico"><use href="#folderopen"/></svg>梁</div>
      <ul>
        <li><div class="row current"><svg class="ico"><use href="#t-beam"/></svg>梁(L)</div></li>
        <li><div class="row"><svg class="ico"><use href="#t-ring"/></svg>圈梁(E)</div></li>
      </ul></li>
    <li><div class="row"><svg class="ico"><use href="#folder"/></svg>板</div></li>
    <li class="open"><div class="row"><svg class="ico"><use href="#folderopen"/></svg>基础</div>
      <ul>
        <li><div class="row"><svg class="ico"><use href="#t-fbeam"/></svg>基础梁(F)</div></li>
        <li><div class="row"><svg class="ico"><use href="#t-raft"/></svg>筏板基础(M)</div></li>
        <li><div class="row"><svg class="ico"><use href="#t-pit"/></svg>集水坑(K)</div></li>
        <li><div class="row"><svg class="ico"><use href="#t-pier"/></svg>柱墩(ZD)</div></li>
        <li><div class="row"><svg class="ico"><use href="#t-main"/></svg>筏板主筋(R)</div></li>
        <li><div class="row"><svg class="ico"><use href="#t-neg"/></svg>筏板负筋(X)</div></li>
        <li><div class="row"><svg class="ico"><use href="#t-iso"/></svg>独立基础(P)</div></li>
        <li><div class="row"><svg class="ico"><use href="#t-strip"/></svg>条形基础(T)</div></li>
        <li><div class="row"><svg class="ico"><use href="#t-cap"/></svg>桩承台(V)</div></li>
        <li><div class="row"><svg class="ico"><use href="#t-fbeam"/></svg>承台梁(V)</div></li>
        <li><div class="row"><svg class="ico"><use href="#t-pile"/></svg>桩(U)</div></li>
        <li><div class="row"><svg class="ico"><use href="#t-band"/></svg>基础板带(W)</div></li>
      </ul></li>
    <li><div class="row"><svg class="ico"><use href="#folder"/></svg>其它</div></li>
    <li><div class="row"><svg class="ico"><use href="#folder"/></svg>自定义</div></li>
    <li><div class="row"><svg class="ico"><use href="#folder"/></svg>CAD识别<svg class="ico cad"><use href="#t-cad"/></svg><b class="new">NEW</b></div></li>
  </ul>
  <button class="dock-btn">单构件输入</button>
  <button class="dock-btn">报表预览</button>
</aside>

<main class="main">
  <div class="line">
  <div class="bar"><i class="grip"></i>
    <button class="tb"><svg class="ico"><use href="#brush"/></svg>删除</button><i class="sep"></i>
    <button class="tb"><svg class="ico"><use href="#copy"/></svg>复制</button>
    <button class="tb"><svg class="ico"><use href="#mirror"/></svg>镜像</button><i class="sep"></i>
    <button class="tb"><svg class="ico"><use href="#move"/></svg>移动</button>
    <button class="tb"><svg class="ico"><use href="#rotate"/></svg>旋转</button><i class="sep"></i>
    <button class="tb"><svg class="ico"><use href="#extend"/></svg>延伸</button>
    <button class="tb"><svg class="ico"><use href="#trim"/></svg>修剪</button><i class="sep"></i>
    <button class="tb"><svg class="ico"><use href="#break"/></svg>打断</button>
    <button class="tb"><svg class="ico"><use href="#merge"/></svg>合并</button>
    <button class="tb" disabled><svg class="ico"><use href="#split"/></svg>分割</button><i class="sep"></i>
    <button class="tb"><svg class="ico"><use href="#align"/></svg>对齐<svg class="arr"><use href="#arr"/></svg></button>
    <button class="tb"><svg class="ico"><use href="#offset"/></svg>偏移</button>
    <button class="tb"><svg class="ico"><use href="#stretch"/></svg>拉伸</button><i class="sep"></i>
    <button class="tb" disabled><svg class="ico"><use href="#grip"/></svg>设置夹点</button>
  </div>
  </div>
  <div class="line">
  <div class="bar"><i class="grip"></i>
    <span class="combo w-s"><select aria-label="楼层"><option>首层</option></select></span>
    <span class="combo w-m"><select aria-label="构件类别"><option>梁</option></select></span>
    <span class="combo w-m"><select aria-label="构件类型"><option>梁</option></select></span>
    <span class="combo w-m"><select aria-label="构件名称"><option>KL-1</option></select></span>
    <span class="combo w-m"><select aria-label="分层"><option>分层1</option></select></span><i class="sep"></i>
    <button class="tb"><svg class="ico"><use href="#prop"/></svg>属性</button>
    <button class="tb"><svg class="ico"><use href="#editbar"/></svg>编辑钢筋</button>
    <button class="tb"><svg class="ico"><use href="#list"/></svg>构件列表</button>
    <button class="tb"><svg class="ico"><use href="#pick"/></svg>拾取构件</button>
  </div>
  <div class="bar axes"><i class="grip"></i>
    <button class="tb"><svg class="ico"><use href="#twopt"/></svg>两点</button>
    <button class="tb"><svg class="ico"><use href="#para"/></svg>平行</button>
    <button class="tb"><svg class="ico"><use href="#ptang"/></svg>点角<svg class="arr"><use href="#arr"/></svg></button>
    <button class="tb"><svg class="ico"><use href="#arcax"/></svg>三点辅轴<svg class="arr"><use href="#arr"/></svg></button>
    <button class="tb"><svg class="ico"><use href="#brush"/></svg>删除辅轴</button>
    <button class="tb"><svg class="ico"><use href="#dim"/></svg>尺寸标注<svg class="arr"><use href="#arr"/></svg></button>
  </div>
  </div>
  <div class="line">
  <div class="bar grow"><i class="grip"></i>
    <button class="tb"><svg class="ico"><use href="#cursor"/></svg>选择<svg class="arr"><use href="#arr"/></svg></button><i class="sep"></i>
    <button class="tb"><svg class="ico"><use href="#line"/></svg>直线</button>
    <button class="tb"><svg class="ico"><use href="#ptlen"/></svg>点加长度</button>
    <button class="tb"><svg class="ico"><use href="#arc"/></svg>三点画弧<svg class="arr"><use href="#arr"/></svg></button>
    <span class="combo w-s"><select aria-label="弧线方式"><option></option></select></span>
    <button class="tb"><svg class="ico"><use href="#rect"/></svg>矩形</button><i class="sep"></i>
    <button class="tb"><svg class="ico"><use href="#smart"/></svg>智能布置<svg class="arr"><use href="#arr"/></svg></button><i class="sep"></i>
    <button class="tb"><svg class="ico"><use href="#modseg"/></svg>修改梁段属性</button>
    <button class="tb pressed" aria-pressed="true"><svg class="ico"><use href="#mark"/></svg>原位标注</button><button class="drop" aria-label="原位标注选项"><svg class="arr"><use href="#arr"/></svg></button>
    <div class="split">
      <button class="tb raised"><svg class="ico"><use href="#respan"/></svg>重提梁跨</button><button class="drop raised" aria-label="重提梁跨选项"><svg class="arr"><use href="#arr"/></svg></button>
      <div class="popup-menu">
        <button><svg class="ico"><use href="#respan"/></svg>重提梁跨</button>
        <button><svg class="ico"><use href="#delsup"/></svg>删除支座</button>
        <button><svg class="ico"><use href="#setsup"/></svg>设置支座</button>
      </div>
    </div>
    <button class="tb"><svg class="ico"><use href="#broom"/></svg>梁跨数据复制<svg class="arr"><use href="#arr"/></svg></button>
    <button class="tb"><svg class="ico"><use href="#recog"/></svg>批量识别梁支座</button>
    <button class="tb"><svg class="ico"><use href="#apply"/></svg>应用到同名梁</button>
    <button class="tb"><svg class="ico"><use href="#topbar"/></svg>设置上部筋遇承台</button>
    <button class="more" aria-label="更多">»</button>
  </div>
  </div>

  <div class="canvas">
    <svg class="drawing" role="img" aria-label="梁平面图">
      <g transform="translate(-163 -163)">
        <g fill="#00f400"><path d="M424 198h299v18H424zM416 207h17v300h-17zM565 207h17v300h-17zM714 207h18v300h-18zM424 348h299v17H424z"/></g>
        <path d="M424 497h299v18H424zM410 514l14-25v25zM718 497l5-8 15 25h-15z" fill="#ff0"/>
        <g stroke="#008000" fill="none" shape-rendering="crispEdges">
          <path d="M200 206.500h224M200 356.500h224M200 505.500h224M274.500 207v299M349.500 207v299M424.500 515v66M573.500 515v66M723.500 505v76M424 580.500h299"/>
          <path d="M264 196l21 21M339 196l21 21M339 346l21 21M264 495l22 22M339 495l21 21M414 591l21-21M563 591l21-21M713 591l21-21"/>
          <path id="axisring" d="M187.500 194l6 2 4.500 4 2.500 7-2.500 6-4.500 5-6 2-6-2-5-5-2-6 2-7 5-4z"/>
          <use href="#axisring" y="149"/><use href="#axisring" y="299"/>
          <use href="#axisring" x="237" y="386"/><use href="#axisring" x="386" y="386"/><use href="#axisring" x="536" y="386"/>
        </g>
        <path d="M424.500 207v290M573.500 207v290M723.500 207v298M424 206.500h299M424 356.500h299" stroke="#f00" fill="none" shape-rendering="crispEdges"/>
        <g class="dimtext">
          <text x="189" y="213">C</text><text x="189" y="362">B</text><text x="189" y="511">A</text>
          <text x="425" y="599">1</text><text x="575" y="599">2</text><text x="724" y="599">3</text>
          <text x="503" y="611">3000</text><text x="653" y="611">3000</text>
          <text transform="translate(256 352) rotate(-90)">6000</text>
          <text transform="translate(331 277) rotate(-90)">3000</text>
          <text transform="translate(331 426) rotate(-90)">3000</text>
        </g>
        <path d="M216 556v-38h-2l4-12 4 12h-2v38z" fill="#0f0"/><path d="M218 554h38v-2l12 4-12 4v-2h-38z" fill="red"/>
        <path d="M227 510l5 5 5-5M232 515v4" stroke="#0f0" fill="none"/><path d="M255 535l9 9M264 535l-9 9" stroke="red"/>
        <path d="M559.500 481.500h28v10h-28zM694.500 481.500h28v10h-28zM559.500 519.500h28v11h-28z" fill="none" stroke="#808080"/>
        <g class="beamtext"><text x="524" y="472">KL-1 350*550</text><text x="524" y="483">A8@100/200(4) 2B25;4B25</text></g>
        <path d="M524 469v13" stroke="#fff" stroke-width="2"/>
      </g>
    </svg>
    <form class="span-input">
      <div class="span-head"><label for="seat">1跨左支座筋</label><button type="button" aria-label="关闭"><svg width="9" height="9"><path d="M1 1l7 7M8 1L1 8" stroke="#000" stroke-width="1.500"/></svg></button></div>
      <div class="span-field"><i class="caret"></i><input id="seat" type="text"><svg class="arr"><use href="#arr"/></svg></div>
    </form>
  </div>

  <div class="line snap">
  <div class="bar"><i class="grip"></i>
    <button class="tb"><svg class="ico"><use href="#ortho"/></svg>正交</button>
    <button class="tb pressed"><svg class="ico"><use href="#osnap"/></svg>对象捕捉</button>
    <button class="tb pressed"><svg class="ico"><use href="#dyn"/></svg>动态输入</button>
  </div>
  <div class="bar"><i class="grip"></i>
    <button class="tb"><svg class="ico"><use href="#xpt"/></svg>交点</button>
    <button class="tb pressed"><svg class="ico"><use href="#perp"/></svg>垂点</button>
    <button class="tb pressed"><svg class="ico"><use href="#mid"/></svg>中点</button>
    <button class="tb"><svg class="ico"><use href="#vertex"/></svg>顶点</button>
    <button class="tb"><svg class="ico"><use href="#coord"/></svg>坐标</button>
  </div>
  <div class="bar offsetbar"><i class="grip"></i>
    <span class="combo w-s"><select aria-label="偏移方式"><option>不偏移</option></select></span><i class="sep"></i>
    <label class="dim" for="ox">X=</label><span class="spin"><input id="ox" type="text" value="0" disabled></span><span class="dim">mm</span>
    <label class="dim" for="oy">Y=</label><span class="spin"><input id="oy" type="text" value="0" disabled></span><span class="dim">mm</span><i class="sep"></i>
    <input id="rot" type="checkbox"><label class="rotlabel" for="rot">旋转</label><span class="spin wide"><input type="text" value="0.000" aria-label="旋转角度" disabled></span><span class="dim">°</span>
  </div>
  </div>

  <section class="panel">
    <div class="panel-title"><h2>梁原位标柱</h2><button aria-label="关闭"><svg width="13" height="13"><path d="M1.500 1.500l10 10M11.500 1.500l-10 10" stroke="#000" stroke-width="2"/></svg></button></div>
    <div class="panel-tools">
      <button class="tb"><svg class="ico"><use href="#docs"/></svg>复制跨数据</button>
      <button class="tb" disabled><svg class="ico"><use href="#paste"/></svg>粘贴跨数据</button>
      <button disabled>输入当前列数据</button><button disabled>删除当前列数据</button><button>页面设置</button><button>调换起始跨</button><button>悬臂钢筋代号</button>
    </div>
    <div class="grid">
      <table>
        <colgroup><col class="c30"><col class="c42"><col class="c61"><col class="c61"><col class="c41"><col class="c41"><col class="c41"><col class="c41"><col class="c41"><col class="c61"><col class="c81"><col class="c81"><col class="c81"><col class="c81"><col class="c81"><col class="c81"><col class="c81"><col class="c81"><col class="c101"><col></colgroup>
        <thead>
          <tr><th rowspan="2"></th><th rowspan="2" class="hot">跨号</th><th colspan="2">标高(m)</th><th colspan="7">构件尺寸(mm)</th><th rowspan="2">上通长筋</th><th colspan="3">上部钢筋</th><th colspan="2">下部钢筋</th><th colspan="3">侧面钢筋</th></tr>
          <tr><th>起点标高</th><th>终点标高</th><th>A1</th><th>A2</th><th>A3</th><th>A4</th><th>跨长</th><th>截面(B*H)</th><th>距左边线距离</th><th>左支座钢筋</th><th>跨中钢筋</th><th>右支座钢筋</th><th>下通长筋</th><th>下部钢筋</th><th>侧面通长筋</th><th>侧面原位标注筋</th><th>拉筋</th></tr>
        </thead>
        <tbody>
          <tr><th class="rowno">1</th><td class="active">1</td><td>2.95</td><td>2.95</td><td class="in">(0)</td><td class="in">(0)</td><td class="in">(0)</td><td class="in">(0)</td><td class="in">(6000)</td><td class="in">(350*550)</td><td class="in">(175)</td><td>2<svg class="phi"><path d="M2.500 3.500h7v4h-7zM6 0v10M2 10.500h8" fill="none" stroke="#000"/></svg>25</td><td></td><td></td><td></td><td>4<svg class="phi"><path d="M2.500 3.500h7v4h-7zM6 0v10M2 10.500h8" fill="none" stroke="#000"/></svg>25</td><td></td><td></td><td></td><td></td></tr>
        </tbody>
      </table>
    </div>
    <div class="hscroll"><button aria-label="向左"><svg width="5" height="7"><path d="M4 0v7L0 3.500z" fill="#333"/></svg></button><div class="track"><div class="thumb"><i></i><i></i><i></i></div></div><button aria-label="向右"><svg width="5" height="7"><path d="M1 0v7l4-3.500z" fill="#333"/></svg></button></div>
  </section>
</main>
</div>

<footer class="status"><span class="s1">X=9750 Y=6861</span><span class="s2">层高:3m</span><span class="s3">底标高:-0.05m</span><span class="s4">1(6)</span><span class="s5">按鼠标左键选择梁图元,按右键或ESC退出;可以通过回车键及shift+"→←↑"光标键在跨之间、上下输入框之间进行切换</span><span class="s6">160.4 FPS</span></footer>
</div>

<div class="taskbar">
  <button class="start" aria-label="开始"><svg width="38" height="38"><use href="#orb"/></svg></button>
  <button class="task" aria-label="记事"><svg><use href="#note"/></svg></button>
  <button class="task on" aria-label="钢筋算量"><svg><use href="#app"/></svg></button>
  <button class="task run" aria-label="资源管理器"><svg><use href="#explorer"/></svg></button>
  <button class="task" aria-label="图形算量"><svg><use href="#gapp"/></svg></button>
  <button class="task" aria-label="D"><svg><use href="#dapp"/></svg></button>
  <button class="task" aria-label="便笺"><svg><use href="#note2"/></svg></button>
  <button class="task" aria-label="聊天"><svg><use href="#faces"/></svg></button>
  <button class="task run multi" aria-label="浏览器"><svg><use href="#ie"/></svg></button>
  <button class="task run" aria-label="广联达"><svg><use href="#swirl"/></svg></button>
  <div class="tray">
    <svg viewBox="0 0 16 16"><path d="M1 6h14v7H1z" fill="#ddd" stroke="#777"/><path d="M2 8h12M2 10h12M4 12h8" stroke="#555" stroke-dasharray="1 1"/><path d="M4 5q0-3 5-2 3 0 3-2" fill="none" stroke="#bbb"/></svg>
    <svg viewBox="0 0 16 16"><circle cx="8" cy="7" r="7" fill="#1b2fc0" stroke="#ccd"/><path d="M6 5q0-2 2-2t2 2q0 1-2 2.500V9M8 10v1.500" stroke="#fff" fill="none" stroke-width="1.600"/></svg>
    <svg viewBox="0 0 16 16"><path d="M6.500-.5h6v4h-6zM4.500 2.500h5v3h-5z" fill="#27395d" stroke="#fff"/><path d="M5 12h6l-3 3z" fill="#fff"/></svg>
    <svg viewBox="0 0 16 16"><path d="M5 12l3 3 3-2z" fill="#3aa0e8"/><circle cx="8" cy="7.500" r="6" fill="url(#gFace)"/><path d="M5 7h9q-1 5-5 5-4-1-4-5z" fill="#d3391c"/></svg>
    <svg viewBox="0 0 16 16"><path d="M2 1q6 2 12 0v7q-1 5-6 7-5-2-6-7z" fill="#3d78b8" stroke="#d3deeb"/><path d="M4 7l8-3v2L4 9zM5 11l7-3v2l-6 3z" fill="#eef"/></svg>
    <svg viewBox="0 0 16 16"><path d="M2 1h4v12L2 9zM6 1h6v9l-3 5-3-2z" fill="#f3d688" stroke="#9a7427" stroke-width=".7"/><circle cx="11.500" cy="12" r="3" fill="#22861c"/></svg>
    <svg viewBox="0 0 16 16"><path d="M4 2h10v12H4z" fill="#cfe8f8" stroke="#678"/><path d="M6 3h3v3H6z" fill="#e0562f"/><path d="M10 3h3v3h-3z" fill="#5ba838"/><path d="M6 7h3v3H6z" fill="#3477d0"/><path d="M1 10q2 5 11-1M2 10q4-8 12-5" fill="none" stroke="#ee9c32" stroke-width="1.500"/></svg>
    <svg viewBox="0 0 16 16"><circle cx="8" cy="8" r="7.500" fill="#f3d72c"/><path d="M1 10q0 6 7 5.500Q15 15 15 8q-6 5-14 2z" fill="#7ec32d"/><path d="M8 4v8M4 8h8" stroke="#14651a" stroke-width="3"/></svg>
    <svg viewBox="0 0 32 32"><use href="#swirl"/></svg>
    <svg viewBox="0 0 16 16"><path d="M2 1v14" stroke="#fff" stroke-width="1.500"/><path d="M3 2h5v2h7l-2 4H9V7H3z" fill="#fff"/></svg>
    <svg viewBox="0 0 16 16"><path d="M6.500 4.500h9v7h-9zM8 14.500h6M11 12v2M1 1v4h4V1M3 5v8h3M2 0v2M4 0v2" fill="none" stroke="#fff" stroke-width="1.300"/></svg>
    <svg viewBox="0 0 16 16"><path d="M1 5h3l4-4v14l-4-4H1z" fill="#fff"/><path d="M10 5q2 3 0 6M12 3q4 5 0 10" fill="none" stroke="#fff"/></svg>
  </div>
  <time class="clock">11:23<br>2014-3-7</time>
  <button class="desktop" aria-label="显示桌面"></button>
</div>
</body>
</html>
```
FILE: styles.css
```css
* { box-sizing: border-box; }
html, body { height: 100%; }
body {
  margin: 0;
  display: flex;
  flex-direction: column;
  background: #f0f0f0;
  color: #000;
  font: 12px/16px "Noto Sans", "Noto Sans CJK SC", sans-serif;
  overflow: hidden;
  white-space: nowrap;
}
button, input, select { font: inherit; color: inherit; margin: 0; padding: 0; border: 0; background: none; border-radius: 0; }
ul { list-style: none; margin: 0; padding: 0; }
h1, h2 { margin: 0; font-size: 12px; font-weight: 400; }
svg { display: block; flex: none; }
.sprite { position: absolute; }
.ico { width: 16px; height: 16px; }
.arr { width: 5px; height: 3px; }
.window { flex: 1; min-height: 0; display: flex; flex-direction: column; }

/* title and menu */
.titlebar {
  height: 22px; flex: none; display: flex; align-items: center; gap: 5px; position: relative;
  background: linear-gradient(100deg, #8d9cba 0, #a5b2ca 30%, #8797b8 42%, #4e6797 44%, #4a6394 58%, #5b78a8 60%, #3d5688 66%, #415b8d 78%, #34497c 83%, #5273a6 88%, #8fb5e0 91%, #7fa3d0 100%);
  border-bottom: 1px solid #2d3b57;
}
.titlebar h1 { flex: 1; }
.winbtns { display: flex; align-self: flex-start; margin-right: 3px; border: 1px solid #3c465e; border-top: 0; border-radius: 0 0 5px 5px; overflow: hidden; }
.winbtns button { width: 28px; height: 17px; display: grid; place-items: center; background: linear-gradient(#b9c4d6, #7788a5 50%, #5f7292 51%, #93a5c0); border-right: 1px solid #3c465e; }
.winbtns .close { width: 47px; border: 0; background: linear-gradient(#e0a196, #c9523f 50%, #b22c15 51%, #d5684a); }
.menubar { height: 27px; flex: none; display: flex; align-items: center; padding: 1px 0 0 4px; border-bottom: 1px solid #a0a0a0; }
.menubar .grip { margin-right: 2px; }
.menubar button { padding: 0 6px 0 5px; }
.menubar .ico { margin-left: 3px; }

/* toolbars */
.bar { display: flex; align-items: center; align-self: stretch; border: 1px solid #a0a0a0; border-top-color: #fff; border-left-color: #fff; padding-left: 3px; flex: none; }
.grip { width: 3px; height: 22px; margin-right: 4px; border-left: 1px solid #fff; border-right: 1px solid #a0a0a0; flex: none; }
.sep { width: 1px; height: 24px; margin: 0 2px 0 3px; background: #a0a0a0; flex: none; }
.tb { display: flex; align-items: center; gap: 4px; height: 22px; padding: 0 4px 0 3px; flex: none; }
.tb .arr { margin-left: 2px; }
button:disabled { color: #a6a6a6; }
.pressed { border: 1px solid #fff; border-top-color: #888; border-left-color: #888; background: #f8f8f8; }
.drop { width: 9px; height: 22px; display: grid; place-items: center; }
.more { align-self: flex-start; font-weight: 700; line-height: 14px; }
.topbars { height: 30px; flex: none; display: flex; }
.bar-file { width: 152px; padding-left: 4px; }
.bar-file .grip { margin-right: 1px; }
.bar-file .tb { padding: 0 4px 0 5px; }
.bar-file .more, .bar-def .more, .grow .more { margin-left: auto; margin-right: 4px; }
.bar-def { width: 605px; padding-left: 6px; }
.bar-view { flex: 1; padding-left: 4px; }
.bar-view .grip { margin-right: 3px; }
.combo { display: flex; align-items: center; position: relative; height: 20px; background: #fff; margin-right: 4px; flex: none; }
.combo::after { content: ""; position: absolute; right: 0; top: 1px; bottom: 1px; width: 9px; pointer-events: none; background: #f0f0f0; }
.combo::before { content: ""; position: absolute; right: 2px; top: 9px; z-index: 1; border: 3px solid transparent; border-top-color: #000; border-bottom: 0; pointer-events: none; }
.combo select { appearance: none; flex: 1; min-width: 0; height: 20px; padding-left: 2px; }
.w-s { width: 57px; }
.w-m { width: 68px; }
.w-view { width: 60px; padding-left: 2px; }

/* workspace */
.workspace { flex: 1; min-height: 0; display: flex; gap: 3px; }
.dock { width: 160px; flex: none; display: flex; flex-direction: column; font-family: "Noto Sans Mono CJK SC", "Noto Sans CJK SC", sans-serif; padding: 1px 1px 1px 0; }
.dock-title { display: flex; align-items: center; gap: 9px; height: 16px; background: #0054e3; color: #fff; padding-right: 5px; }
.dock-title span { flex: 1; }
.dock-btn { height: 22px; margin: 0 1px; border: 1px solid #a0a0a0; border-top-color: #fff; border-left-color: #fff; }
.dock-title + .dock-btn { margin-top: 1px; }
.tree-tools { height: 27px; display: flex; align-items: center; gap: 6px; padding: 2px 4px 0; margin: 0 1px; border: 1px solid #a0a0a0; }
.tree { flex: 1; min-height: 0; margin: 0 2px 1px; padding-top: 1px; background: #fff; border: 1px solid #828790; }
.row { display: flex; align-items: center; height: 16px; gap: 5px; position: relative; }
.row .ico { height: 15px; }
.tree > li > .row { padding-left: 23px; }
.tree > li > .row::before { content: ""; position: absolute; left: 10px; top: 4px; border: 4px solid transparent; border-left: 5px solid #a6a6a6; border-right: 0; }
.tree > li.open > .row::before { border: 0; border-bottom: 6px solid #333; border-left: 6px solid transparent; top: 5px; }
.tree > li > .row::after { content: ""; position: absolute; left: 18px; top: 8px; width: 4px; border-top: 1px dotted #888; }
.tree ul { margin-left: 12px; border-left: 1px dotted #777; padding-left: 18px; }
.tree ul li { position: relative; padding-left: 8px; }
.tree ul li::before { content: ""; position: absolute; left: 0; top: 0; height: 16px; border-left: 1px dotted #777; }
.tree ul li:last-child::before { height: 8px; }
.tree ul li::after { content: ""; position: absolute; left: 0; top: 8px; width: 10px; border-top: 1px dotted #777; }
.tree ul .row { padding: 0 4px 0 3px; width: max-content; gap: 4px; z-index: 1; }
.row.current { background: #f0f0f0; border-radius: 3px; box-shadow: inset 0 0 0 1px #d4d4d4; }
.row .cad { margin-left: 0; }
.new { font: 700 9px/10px "DejaVu Sans", sans-serif; background: #ffe400; margin: -6px 0 0 -4px; }
.main { flex: 1; min-width: 0; display: flex; flex-direction: column; }
.main .grip { margin-right: 1px; }
.main .tb .arr { margin: 0 -1px 0 1px; }
.line { height: 28px; flex: none; display: flex; }
.line .grow { flex: 1; min-width: 0; }
.grow .w-s { width: 55px; }
.axes { padding-left: 5px; }
.split { display: flex; position: relative; margin-right: 3px; }
.raised { border: 1px solid #888; border-top-color: #fff; border-left-color: #fff; }
.split .tb { padding: 0 3px 0 2px; }
.popup-menu { position: absolute; z-index: 5; top: 100%; left: -1px; width: 101px; display: flex; flex-direction: column; background: #f0f0f0; border: 1px solid #888; padding: 2px 0; }
.popup-menu button { display: flex; align-items: center; gap: 6px; height: 21px; padding-left: 4px; }

/* drawing area */
.canvas { flex: 1; min-height: 0; position: relative; background: #000; overflow: hidden; }
.drawing { width: 100%; height: 100%; }
.dimtext { fill: #eee; font-size: 17px; text-anchor: middle; }
.beamtext { fill: #8c8c8c; font-size: 12px; }
.span-input { position: absolute; left: 262px; top: 318px; width: 100px; background: #fff; font-family: "Noto Sans Mono CJK SC", "Noto Sans CJK SC", sans-serif; }
.span-head { display: flex; align-items: center; height: 15px; padding-left: 12px; line-height: 15px; }
.span-head label { flex: 1; }
.span-head button { width: 13px; height: 13px; display: grid; place-items: center; background: #ddd; border: 1px solid #555; border-radius: 2px; }
.span-field { display: flex; align-items: center; height: 18px; border: 1px solid #a9c7e8; border-top-color: #3c7fb1; padding: 0 4px 0 3px; }
.span-field input { flex: 1; min-width: 0; outline: 0; }
.span-field .arr { width: 7px; height: 4px; }
.caret { width: 1px; height: 13px; background: #000; }

/* snap bar */
.snap { height: 29px; }
.snap .tb.pressed { padding: 0 2px 0 3px; }
.offsetbar .sep { margin: 0 3px; }
.offsetbar .combo { margin-right: 0; }
.line .offsetbar { padding: 0 2px 0 6px; }
.dim { color: #a6a6a6; margin-right: 4px; }
.spin { position: relative; width: 56px; height: 21px; border: 1px solid #fff; margin-right: 3px; }
.spin.wide { width: 66px; margin-right: 5px; }
.spin input { width: 100%; height: 100%; padding-right: 17px; text-align: right; color: #888; }
.spin::before, .spin::after { content: ""; position: absolute; right: 3px; border: 3px solid transparent; }
.spin::before { top: 3px; border-top: 0; border-bottom-color: #888; }
.spin::after { bottom: 3px; border-bottom: 0; border-top-color: #888; }
.offsetbar input[type="checkbox"] { appearance: none; width: 11px; height: 11px; background: #fff; border: 1px solid #999; }
.rotlabel { margin: 0 6px 0 8px; }

/* table panel */
.panel { flex: none; height: 203px; display: flex; flex-direction: column; padding: 5px 2px 1px 0; }
.panel-title { display: flex; align-items: center; justify-content: space-between; height: 21px; flex: none; padding: 0 3px; border: 1px solid #dcdcdc; border-radius: 3px; background: linear-gradient(#f4f4f4, #fff); margin-left: 1px; }
.panel-title h2, .grid, .status { font-family: "Noto Sans Mono CJK SC", "Noto Sans CJK SC", sans-serif; }
.panel-tools { display: flex; align-items: center; height: 27px; flex: none; gap: 10px; padding: 1px 0 0 2px; border-right: 1px solid #a0a0a0; border-bottom: 1px solid #a0a0a0; }
.panel-tools .tb { margin-right: -4px; }
.panel-tools .tb + .tb { margin: 0 -4px 0 -6px; }
.grid { flex: 1; min-height: 0; overflow: hidden; background: #fff; border: 1px solid #a0a0a0; border-bottom: 0; border-left-color: #828790; padding-top: 1px; }
table { width: 100%; table-layout: fixed; border-collapse: separate; border-spacing: 0; margin-left: 1px; }
th, td { height: 19px; padding: 0; border-right: 1px solid #c3c3c3; border-bottom: 1px solid #c3c3c3; font-weight: 400; line-height: 16px; }
th { background: linear-gradient(#fff, #f1f1f1); text-align: center; }
td { background: #a6c9ef; padding-left: 1px; text-align: left; }
td.in { padding-left: 3px; }
.hot { background: linear-gradient(#fbdda6, #f3c26c); color: #800080; }
.rowno { background: #ffd58d; color: #800080; }
td.active { background: #94c2f3; box-shadow: inset 0 0 0 2px #808080; padding-left: 3px; }
.c30 { width: 30px; } .c41 { width: 41px; } .c42 { width: 42px; } .c61 { width: 61px; } .c81 { width: 81px; } .c101 { width: 101px; }
.phi { display: inline-block; width: 12px; height: 12px; vertical-align: -2px; }
.hscroll { display: flex; align-items: center; height: 17px; flex: none; background: #ececec; border: 1px solid #a0a0a0; border-top-color: #e0e0e0; }
.hscroll button { width: 19px; height: 15px; display: grid; place-items: center; }
.track { flex: 1; }
.thumb { width: 51.5%; height: 14px; display: flex; justify-content: center; align-items: center; gap: 2px; border: 1px solid #989898; border-radius: 2px; background: linear-gradient(#f5f5f5, #e6e6e6 50%, #cfcfcf 51%, #c4c4c4); }
.thumb i { width: 1px; height: 6px; background: #555; }

/* status bar */
.status { display: flex; height: 22px; flex: none; gap: 2px; padding-top: 2px; }
.status span { height: 19px; line-height: 17px; border: 1px solid #fff; border-top-color: #a0a0a0; border-left-color: #a0a0a0; padding-left: 1px; }
.s1 { width: 148px; } .s2 { width: 78px; } .s3 { width: 97px; } .s4 { width: 48px; } .s5 { flex: 1; } .s6 { width: 71px; }

/* taskbar */
.taskbar {
  height: 40px; flex: none; display: flex; align-items: center; gap: 3px; padding-left: 8px; border-top: 1px solid #16203a;
  background: linear-gradient(rgba(190, 220, 245, .75), rgba(110, 145, 185, .35) 25%, rgba(20, 35, 60, .1) 55%, rgba(20, 30, 60, .1)), linear-gradient(90deg, #22395a, #3c548b 10%, #36508a 50%, #3a5a92 66%, #1f3454 73%, #26395b);
}
.start { margin-right: 10px; }
.task { width: 59px; height: 39px; display: grid; place-items: center; border-radius: 3px; }
.task svg { width: 32px; height: 32px; }
.task.run { border: 1px solid rgba(220, 235, 250, .6); background: linear-gradient(rgba(255, 255, 255, .35), rgba(255, 255, 255, .1)); }
.task.on { border: 1px solid #dfe9f4; background: linear-gradient(120deg, #e2eaf3, #a7b6cb 50%, #8496b2 51%, #b4c1d4); }
.task.multi { width: 50px; margin: 0 8px 0 1px; box-shadow: 3px 0 0 -1px #4c6894, 4px 0 0 -1px #9fb5d0, 7px 0 0 -1px #4c6894, 8px 0 0 -1px #9fb5d0; }
.tray { margin: 0 3px 0 auto; display: flex; align-items: center; gap: 7px; }
.tray svg { width: 16px; height: 16px; overflow: visible; }
.clock { width: 76px; text-align: center; color: #fff; line-height: 18px; }
.desktop { width: 13px; height: 38px; border: 1px solid #8496b0; background: linear-gradient(120deg, rgba(255, 255, 255, .35), rgba(255, 255, 255, .05)); }
```
